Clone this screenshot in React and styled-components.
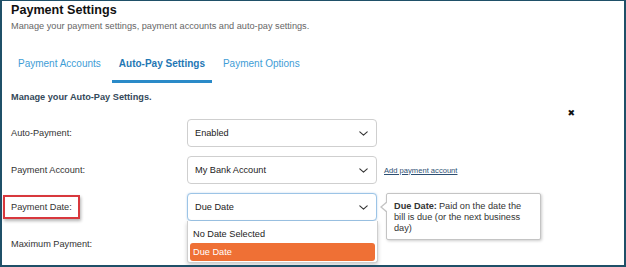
import React from "react";
import styled, { createGlobalStyle } from "styled-components";

const GlobalStyle = createGlobalStyle`
  html, body {
    margin: 0;
    padding: 0;
    background: #ffffff;
  }
  body {
    font-family: "Liberation Sans", Arial, sans-serif;
  }
`;

const Frame = styled.div`
  box-sizing: border-box;
  width: 626px;
  height: 267px;
  overflow: hidden;
  border: 2px solid #1f5068;
  border-top-width: 1px;
  padding: 2px 0 0 9px;
  background: #ffffff;
  color: #222;
`;

const Title = styled.h1`
  margin: 0;
  font-size: 12.6px;
  line-height: 15px;
  font-weight: 700;
  color: #111;
`;

const Subtitle = styled.p`
  margin: 3px 0 0;
  font-size: 9.2px;
  line-height: 11px;
  color: #666;
`;

const Tabs = styled.nav`
  display: flex;
  gap: 4px;
  margin-top: 25.5px;
`;

const Tab = styled.span`
  padding: 0 7px 10px;
  font-size: 10px;
  line-height: 12px;
  font-weight: ${(p) => (p.$active ? 700 : 400)};
  color: ${(p) => (p.$active ? "#1f77b4" : "#3e9dd6")};
  border-bottom: 3px solid ${(p) => (p.$active ? "#2a8ac8" : "transparent")};
`;

const Section = styled.section`
  display: flex;
  margin-top: 9.5px;
`;

const FormArea = styled.div`
  flex: 1;
`;

const SectionTitle = styled.h2`
  margin: 0 0 16px;
  font-size: 9.2px;
  line-height: 11px;
  font-weight: 700;
  color: #34495a;
`;

const Rows = styled.div`
  display: flex;
  flex-direction: column;
  gap: 9px;
`;

const Row = styled.div`
  display: flex;
  align-items: center;
  height: 28px;
`;

const Label = styled.div`
  position: relative;
  width: 176px;
  font-size: 9.2px;
  color: #333;
`;

const Highlight = styled.span`
  position: absolute;
  left: -8px;
  top: -7px;
  width: 73px;
  height: 20px;
  border: 2px solid #d8383d;
  box-shadow: 1px 2px 3px rgba(0, 0, 0, 0.3);
`;

const SelectWrap = styled.div`
  position: relative;
  width: 190px;
  height: 28px;
`;

const SelectBox = styled.div`
  box-sizing: border-box;
  display: flex;
  align-items: center;
  justify-content: space-between;
  height: 100%;
  padding: 0 8px 0 7px;
  border: 1px solid ${(p) => (p.$focused ? "#9cc4e6" : "#cfcfcf")};
  border-radius: 4px;
  background: #fff;
  font-size: 9.2px;
  color: #222;
  box-shadow: ${(p) => (p.$focused ? "0 0 2px rgba(90,150,210,0.4)" : "none")};
`;

const Chevron = () => (
  <svg width="9" height="5" viewBox="0 0 9 5" fill="none">
    <path d="M0.8 0.8l3.7 3.4 3.7-3.4" stroke="#333" strokeWidth="1.1" strokeLinecap="round" strokeLinejoin="round" />
  </svg>
);

const AddLink = styled.a`
  margin-left: 7px;
  font-size: 7.6px;
  color: #2d4f73;
  text-decoration: underline;
`;

const Menu = styled.ul`
  position: absolute;
  left: 0;
  top: 28px;
  z-index: 2;
  box-sizing: border-box;
  width: 191px;
  margin: 0;
  padding: 4px 2px 1px;
  list-style: none;
  background: #fff;
  border: 1px solid #cfcfcf;
  border-top: none;
  border-radius: 0 0 3px 3px;
  box-shadow: 0 2px 4px rgba(0, 0, 0, 0.2);
`;

const Option = styled.li`
  height: 18px;
  display: flex;
  align-items: center;
  padding: 0 3px;
  border-radius: 3px;
  font-size: 9.2px;
  color: ${(p) => (p.$selected ? "#fff" : "#222")};
  background: ${(p) => (p.$selected ? "#ef7035" : "transparent")};
`;

const Tooltip = styled.div`
  position: absolute;
  left: 199px;
  top: 0;
  z-index: 2;
  box-sizing: border-box;
  width: 155px;
  height: 47px;
  padding: 7px 16px 6px 7px;
  background: #fff;
  border: 1px solid #c4c4c4;
  border-radius: 2px;
  box-shadow: 1px 1px 3px rgba(0, 0, 0, 0.2);
  font-size: 9.2px;
  line-height: 11px;
  color: #333;

  &::before,
  &::after {
    content: "";
    position: absolute;
    top: 7px;
    border-style: solid;
    border-color: transparent;
  }
  &::before {
    left: -7px;
    border-width: 6px 7px 6px 0;
    border-right-color: #c4c4c4;
  }
  &::after {
    left: -5px;
    top: 8px;
    border-width: 5px 6px 5px 0;
    border-right-color: #fff;
  }
`;

const TipTerm = styled.strong`
  font-weight: 700;
  margin-right: 2px;
`;

const Close = styled.button`
  align-self: flex-start;
  margin: 16px 49px 0 0;
  padding: 0;
  border: none;
  background: none;
  font-size: 9px;
  line-height: 10px;
  font-weight: 700;
  color: #111;
  font-family: "DejaVu Sans", sans-serif;
`;

const Field = ({ label, value, highlighted, children, aside }) => (
  <Row>
    <Label>
      {highlighted && <Highlight />}
      {label}
    </Label>
    <SelectWrap>
      <SelectBox $focused={highlighted}>
        <span>{value}</span>
        <Chevron />
      </SelectBox>
      {children}
    </SelectWrap>
    {aside}
  </Row>
);

export default function App() {
  return (
    <>
      <GlobalStyle />
      <Frame>
        <Title>Payment Settings</Title>
        <Subtitle>Manage your payment settings, payment accounts and auto-pay settings.</Subtitle>
        <Tabs>
          <Tab>Payment Accounts</Tab>
          <Tab $active>Auto-Pay Settings</Tab>
          <Tab>Payment Options</Tab>
        </Tabs>
        <Section>
          <FormArea>
            <SectionTitle>Manage your Auto-Pay Settings.</SectionTitle>
            <Rows>
              <Field label="Auto-Payment:" value="Enabled" />
              <Field
                label="Payment Account:"
                value="My Bank Account"
                aside={<AddLink>Add payment account</AddLink>}
              />
              <Field label="Payment Date:" value="Due Date" highlighted>
                <Menu>
                  <Option>No Date Selected</Option>
                  <Option $selected>Due Date</Option>
                </Menu>
                <Tooltip>
                  <TipTerm>Due Date:</TipTerm>Paid on the date the bill is due (or the next business day)
                </Tooltip>
              </Field>
              <Field label="Maximum Payment:" value="" />
            </Rows>
          </FormArea>
          <Close aria-label="Close">✖</Close>
        </Section>
      </Frame>
    </>
  );
}
